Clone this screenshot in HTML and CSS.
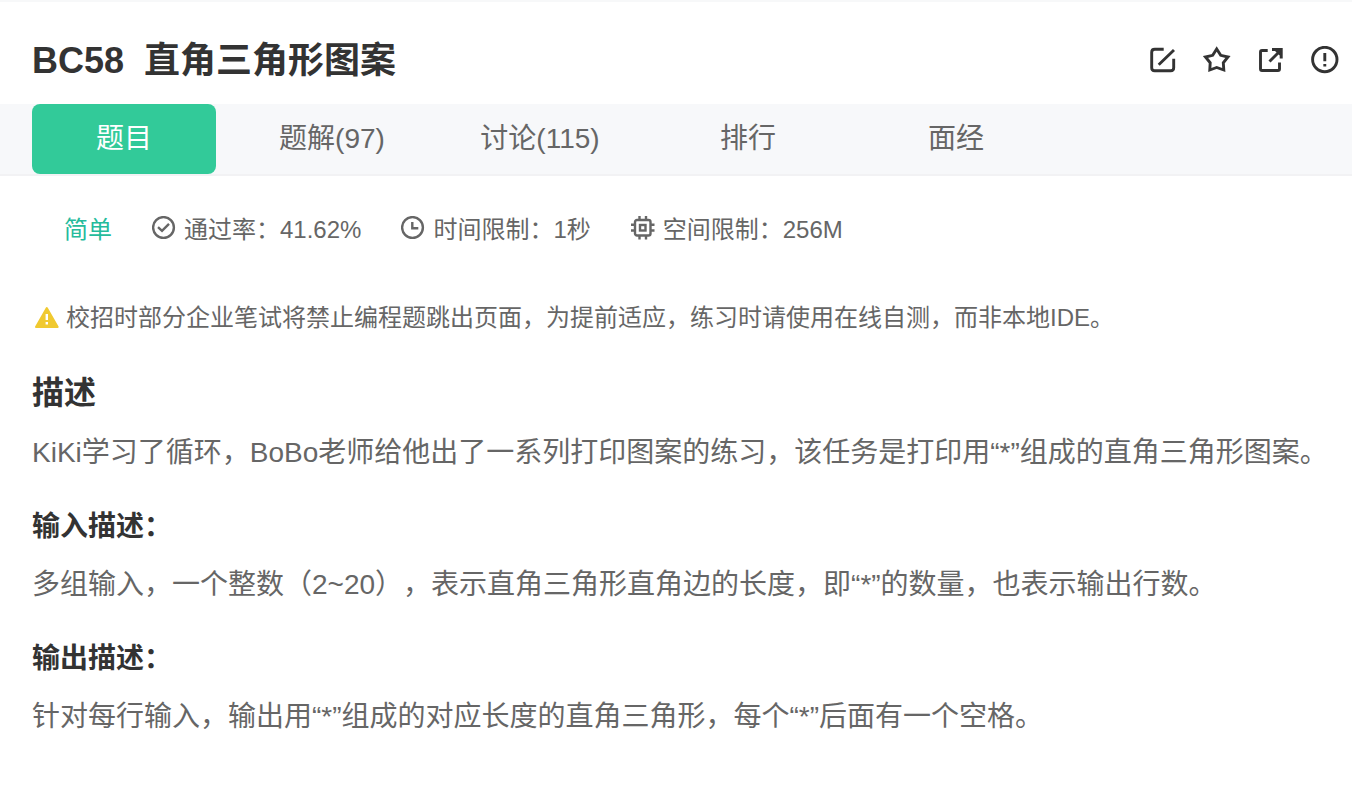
FILE: index.html
```html
<!DOCTYPE html>
<html lang="zh-CN">
<head>
<meta charset="utf-8">
<title>BC58 直角三角形图案</title>
<link rel="stylesheet" href="styles.css">
</head>
<body>
<header class="header">
  <h1 class="title"><span>BC58</span><span>直角三角形图案</span></h1>
  <div class="actions">
    <button class="icon-button" type="button" aria-label="笔记"><svg class="icon" viewBox="0 0 28 28"><path d="M14.700 3.200H5.700Q2.700 3.200 2.700 6.200V21.700Q2.700 24.700 5.700 24.700H21.700Q24.700 24.700 24.700 21.700V12.700M9.700 18.700L25 4"/></svg></button>
    <button class="icon-button" type="button" aria-label="收藏"><svg class="icon" viewBox="0 0 28 28"><path d="M13.700 3L17.700 9.300 25 11 20.300 16.800 20.800 24 13.700 21.500 6.800 24 7.200 16.800 2.500 11 9.700 9.300z"/></svg></button>
    <button class="icon-button" type="button" aria-label="分享"><svg class="icon" viewBox="0 0 28 28"><path d="M10.700 4.500H5Q3.500 4.500 3.500 6V23Q3.500 24.500 5 24.500H21Q22.500 24.500 22.500 23V16.500M12.500 15.500L23 5"/><path class="icon-fill" d="M15 2H25.700V12.500H22.700V9.500L18 5H15z"/></svg></button>
    <button class="icon-button" type="button" aria-label="反馈"><svg class="icon" viewBox="0 0 28 28"><circle cx="13.800" cy="13.500" r="12.200"/><path d="M13.800 7v8.300M13.800 18v2.500"/></svg></button>
  </div>
</header>
<nav class="tabs">
  <a class="tab tab-active" href="#topic">题目</a>
  <a class="tab" href="#solutions">题解(97)</a>
  <a class="tab" href="#discussion">讨论(115)</a>
  <a class="tab" href="#ranking">排行</a>
  <a class="tab" href="#interview">面经</a>
</nav>
<main class="content" id="topic">
  <div class="meta">
    <span class="level">简单</span>
    <span class="meta-item"><svg class="meta-icon" viewBox="0 0 24 24"><circle cx="11.500" cy="11.500" r="10.400"/><path d="M6 11.200l4 3.600 7-7"/></svg>通过率：41.62%</span>
    <span class="meta-item"><svg class="meta-icon" viewBox="0 0 24 24"><circle cx="11.500" cy="11.500" r="10.400"/><path d="M11.300 6v6.200h6"/></svg>时间限制：1秒</span>
    <span class="meta-item"><svg class="meta-icon" viewBox="0 0 24 24"><rect x="4" y="4" width="15.500" height="15.500" rx="2"/><rect x="9" y="9" width="5.500" height="5.500"/><path d="M8.500 0v4M15 0v4M8.500 19.500v4M15 19.500v4M0 8.700h4M0 14.500h4M19.500 8.700h4M19.500 14.500h4"/></svg>空间限制：256M</span>
  </div>
  <p class="notice"><svg class="warning" viewBox="0 0 26 24"><path class="warning-body" d="M12.800 2L23.700 21H2z"/><path class="warning-mark" d="M12.800 8v6M12.800 16v2.500"/></svg>校招时部分企业笔试将禁止编程题跳出页面，为提前适应，练习时请使用在线自测，而非本地IDE。</p>
  <h2 class="heading">描述</h2>
  <p class="text">KiKi学习了循环，BoBo老师给他出了一系列打印图案的练习，该任务是打印用“*”组成的直角三角形图案。</p>
  <h3 class="subheading">输入描述：</h3>
  <p class="text">多组输入，一个整数（2~20），表示直角三角形直角边的长度，即“*”的数量，也表示输出行数。</p>
  <h3 class="subheading">输出描述：</h3>
  <p class="text">针对每行输入，输出用“*”组成的对应长度的直角三角形，每个“*”后面有一个空格。</p>
</main>
</body>
</html>
```
FILE: styles.css
```css
* { box-sizing: border-box; }
body {
  margin: 0;
  border-top: 2px solid #f7f8f9;
  background: #fff;
  color: #666;
  font-family: "Liberation Sans", "Noto Sans CJK SC", sans-serif;
  text-spacing-trim: space-all;
}
h1, h2, h3, p { margin: 0; }
.header {
  display: flex;
  align-items: center;
  justify-content: space-between;
  padding: 32px 13px 16px 32px;
}
.title {
  display: flex;
  gap: 20px;
  color: #333;
  font-size: 36px;
  line-height: 54px;
}
.actions { display: flex; gap: 26px; padding-bottom: 2px; }
.icon-button {
  display: flex;
  padding: 0;
  border: 0;
  background: none;
  color: #333;
}
.icon {
  width: 28px;
  height: 28px;
  fill: none;
  stroke: currentColor;
  stroke-width: 2.9;
}
.icon-fill { fill: currentColor; stroke: none; }
.tabs {
  display: flex;
  gap: 24px;
  padding: 0 32px;
  height: 72px;
  background: #f7f8fa;
  border-bottom: 2px solid #f2f2f4;
}
.tab {
  width: 184px;
  height: 70px;
  border-radius: 8px;
  color: #666;
  font-size: 28px;
  line-height: 70px;
  text-align: center;
  text-decoration: none;
}
.tab-active { background: #32ca99; color: #fff; }
.content { padding: 36px 16px 36px 32px; }
.meta {
  display: flex;
  gap: 40px;
  padding-left: 32px;
  font-size: 24px;
  line-height: 36px;
}
.level { color: #25bb9b; }
.meta-item { display: flex; align-items: center; gap: 8px; }
.meta-icon {
  width: 24px;
  height: 24px;
  margin-bottom: 4px;
  fill: none;
  stroke: #666;
  stroke-width: 2.4;
}
.notice {
  display: flex;
  align-items: center;
  gap: 6px;
  padding-left: 2px;
  margin-top: 52px;
  font-size: 24px;
  line-height: 36px;
}
.warning { width: 26px; height: 24px; flex: none; }
.warning-body { fill: #f0c930; stroke: #f0c930; stroke-width: 2; stroke-linejoin: round; }
.warning-mark { stroke: #fff; stroke-width: 2.4; }
.heading {
  margin-top: 33px;
  color: #333;
  font-size: 32px;
  line-height: 48px;
}
.text {
  margin-top: 7px;
  font-size: 28px;
  line-height: 58px;
}
.subheading {
  margin-top: 23px;
  color: #333;
  font-size: 28px;
  line-height: 44px;
}
```
